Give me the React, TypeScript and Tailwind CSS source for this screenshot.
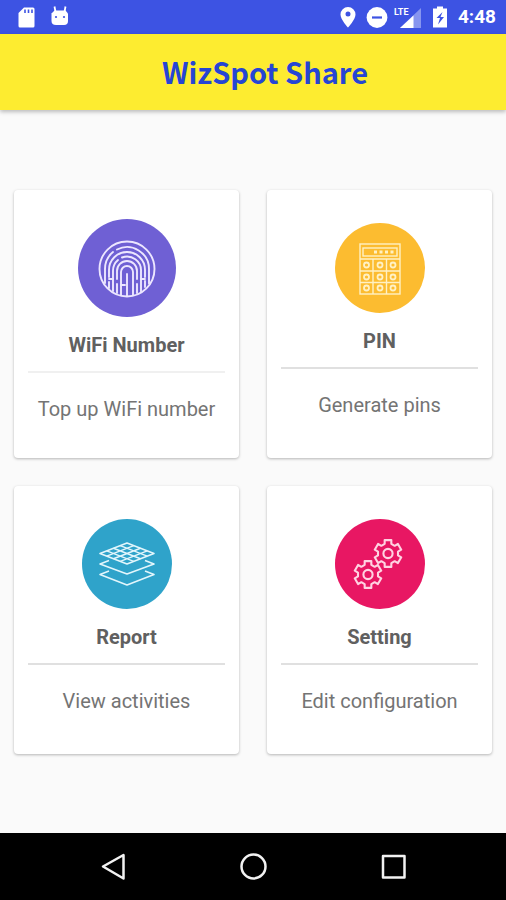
import type { ReactNode } from "react";

function gearPath(cx: number, cy: number): string {
  const points: string[] = [];
  const add = (radius: number, degrees: number) => {
    const a = (degrees * Math.PI) / 180;
    points.push(`${(cx + radius * Math.cos(a)).toFixed(2)} ${(cy + radius * Math.sin(a)).toFixed(2)}`);
  };
  for (let tooth = 0; tooth < 6; tooth++) {
    const mid = tooth * 60 - 90;
    add(10.2, mid - 19);
    add(13.8, mid - 14);
    add(13.8, mid + 14);
    add(10.2, mid + 19);
  }
  return `M${points.join("L")}Z`;
}

function FingerprintIcon() {
  return (
    <svg viewBox="0 0 98 98" className="size-[98px]" fill="none" stroke="#ece6ff" strokeWidth="1.9" strokeLinecap="round" aria-hidden="true">
      <circle cx="49" cy="50" r="27.500" />
      <path d="M27 64V50a22 22 0 0 1 8-17M39 30.500a22 22 0 0 1 32 20v14" />
      <path d="M31 69V63M31 58V51a18 18 0 0 1 36 0v7M67 62v6" />
      <path d="M35 72V52a14 14 0 0 1 5-11M44 38.500a14 14 0 0 1 19 14v20" />
      <path d="M39 74V65M39 60V52a10 10 0 0 1 20 0v8M59 65v9" />
      <path d="M43 76V53a6 6 0 0 1 12 0v23" />
      <path d="M49 77V55" />
      <path d="M31 60h4M63 60h4M43 66h4" />
    </svg>
  );
}

function KeypadIcon() {
  return (
    <svg viewBox="0 0 90 90" className="size-[90px]" fill="none" stroke="#fff1c4" strokeWidth="1.4" aria-hidden="true">
      <rect x="25" y="21" width="40" height="50" />
      <rect x="28" y="25" width="34" height="8" />
      <path d="M25 36h40M25 48h40M25 59.500h40M38 36v35M51.500 36v35" />
      <path d="M39 29h20" strokeWidth="3" strokeDasharray="3 2.500" />
      {[42, 54, 65].map((y) => [31.5, 45, 58].map((x) => <circle key={`${x}-${y}`} cx={x} cy={y} r="2.500" strokeWidth="1.8" />))}
    </svg>
  );
}

function LayersIcon() {
  return (
    <svg viewBox="0 0 90 90" className="size-[90px]" fill="none" stroke="#e2f6fc" strokeWidth="1.6" strokeLinejoin="round" aria-hidden="true">
      <path d="M45 24L72 34.500L45 45L18 34.500Z" />
      <path d="M38.250 26.625l27 10.500M31.500 29.250l27 10.500M24.750 31.875l27 10.500M51.750 26.625l-27 10.500M58.500 29.250l-27 10.500M65.250 31.875l-27 10.500" strokeWidth="1.400" />
      <path d="M27 41.500L18 45L45 55L72 45L63 41.500" />
      <path d="M27 52L18 55.500L45 66L72 55.500L63 52" />
    </svg>
  );
}

function GearsIcon() {
  return (
    <svg viewBox="0 0 90 90" className="size-[90px]" fill="none" stroke="#ffd3e2" strokeWidth="2.1" strokeLinejoin="round" aria-hidden="true">
      <path d={gearPath(53, 34.5)} />
      <circle cx="53" cy="34.500" r="4.600" />
      <path d={gearPath(33, 55.5)} />
      <circle cx="33" cy="55.500" r="4.600" />
    </svg>
  );
}

type TileProps = { title: string; detail: string; color: string; line: string; children: ReactNode };

function Tile({ title, detail, color, line, children }: TileProps) {
  return (
    <button
      type="button"
      className="flex min-h-[268px] flex-col items-center justify-center rounded-sm bg-white px-3.5 pb-2 text-xl leading-6 shadow-[0_1px_3px_rgba(0,0,0,0.28)]"
    >
      <span className={`rounded-full ${color}`}>{children}</span>
      <span className="mt-4 font-bold text-[#606060]">{title}</span>
      <span className={`mt-3.5 h-0.5 w-full ${line}`} />
      <span className="mt-6 text-[#747474]">{detail}</span>
    </button>
  );
}

function StatusBar() {
  return (
    <div className="flex h-[34px] items-center justify-between bg-[#3d53e3] pr-2.5 pl-4 text-white">
      <div className="flex items-center gap-3.5">
        <svg viewBox="0 0 20 22" className="h-[22px] w-5" aria-label="SD card" role="img">
          <path d="M8 1.500h9a1.500 1.500 0 0 1 1.500 1.500v17A1.500 1.500 0 0 1 17 21.500H4a1.500 1.500 0 0 1-1.500-1.500V7Z" fill="currentColor" />
          <path d="M9 3.500v3.500M12.500 3.500v3.500M16 3.500v3.500" stroke="#3d53e3" strokeWidth="1.600" />
        </svg>
        <svg viewBox="0 0 20 22" className="h-[22px] w-5" aria-label="Debugging" role="img">
          <path d="M1.500 7.500L4.500 4.500h11L18 7.500V15q0 4-4 4H6q-4.500 0-4.500-4Z" fill="currentColor" />
          <path d="M5.500 6L4.500 0.500M14.500 6L15.500 0.500" stroke="currentColor" strokeWidth="1.800" />
          <circle cx="6" cy="11" r="1.100" fill="#3d53e3" />
          <circle cx="14" cy="11" r="1.100" fill="#3d53e3" />
        </svg>
      </div>
      <div className="flex items-center">
        <svg viewBox="0 0 16 22" className="mr-2.5 h-[22px] w-4" aria-label="Location" role="img">
          <path d="M8 1a7.500 7.500 0 0 0-7.500 7.500c0 5 7.500 13 7.500 13s7.500-8 7.500-13a7.500 7.500 0 0 0-7.500-7.500Zm0 4.500a2.500 2.500 0 1 1 0 5a2.500 2.500 0 0 1 0-5Z" fill="currentColor" />
        </svg>
        <svg viewBox="0 0 22 22" className="mr-1.5 size-[22px]" aria-label="Do not disturb" role="img">
          <circle cx="11" cy="11.500" r="10.400" fill="currentColor" />
          <path d="M6 11.500h10" stroke="#3d53e3" strokeWidth="2.200" />
        </svg>
        <div className="relative mr-2.5 h-[22px] w-7">
          <svg viewBox="0 0 28 22" className="h-[22px] w-7" aria-hidden="true">
            <path d="M27 2V22H6Z" fill="#8795ef" />
            <path d="M19.500 9.500V22H6Z" fill="currentColor" />
          </svg>
          <span className="absolute top-0 left-0 bg-[#3d53e3] text-[9px] leading-[12px] font-bold">LTE</span>
        </div>
        <svg viewBox="0 0 16 22" className="mr-2.5 h-[22px] w-4" aria-label="Battery charging" role="img">
          <path d="M5 0.500h6v2h4V21.500h-14V2.500H5Z" fill="currentColor" />
          <path d="M10.500 6L4.500 12h3.500L6 18.500l6-7.500H8.500Z" fill="#3d53e3" />
        </svg>
        <span className="text-[19px] leading-6 font-bold">4:48</span>
      </div>
    </div>
  );
}

function NavBar() {
  return (
    <nav className="flex h-[67px] items-center justify-center gap-28 bg-black text-[#f2f2f2]">
      <button type="button" aria-label="Back">
        <svg viewBox="0 0 28 28" className="size-7" fill="none" stroke="currentColor" strokeWidth="2.500" strokeLinejoin="round">
          <path d="M24.500 2V25.500L4 13.500Z" />
        </svg>
      </button>
      <button type="button" aria-label="Home">
        <svg viewBox="0 0 28 28" className="size-7" fill="none" stroke="currentColor" strokeWidth="2.500">
          <circle cx="14.500" cy="13.500" r="12" />
        </svg>
      </button>
      <button type="button" aria-label="Recent apps">
        <svg viewBox="0 0 28 28" className="size-7" fill="none" stroke="currentColor" strokeWidth="2.500" strokeLinejoin="round">
          <rect x="4" y="3" width="21.500" height="21.500" />
        </svg>
      </button>
    </nav>
  );
}

export default function App() {
  return (
    <div className="flex min-h-screen flex-col bg-[#fafafa] font-[Roboto,sans-serif]">
      <StatusBar />
      <header className="flex h-[76px] items-center justify-center bg-[#fdec30] pb-0.5 pl-6 shadow-[0_2px_4px_rgba(0,0,0,0.25)]">
        <h1 className="font-['Noto_Sans_CJK_SC',sans-serif] text-[29px] leading-9 font-bold text-[#2645d4]">WizSpot Share</h1>
      </header>
      <main className="flex flex-1 flex-col justify-center px-3.5 py-7">
        <div className="grid grid-cols-2 gap-7">
          <Tile title="WiFi Number" detail="Top up WiFi number" color="bg-[#6f60d4]" line="bg-[#f0f0f0]">
            <FingerprintIcon />
          </Tile>
          <Tile title="PIN" detail="Generate pins" color="bg-[#fcbc30]" line="bg-[#e0e0e0]">
            <KeypadIcon />
          </Tile>
          <Tile title="Report" detail="View activities" color="bg-[#2fa3ca]" line="bg-[#e0e0e0]">
            <LayersIcon />
          </Tile>
          <Tile title="Setting" detail="Edit configuration" color="bg-[#e81763]" line="bg-[#e0e0e0]">
            <GearsIcon />
          </Tile>
        </div>
      </main>
      <NavBar />
    </div>
  );
}
